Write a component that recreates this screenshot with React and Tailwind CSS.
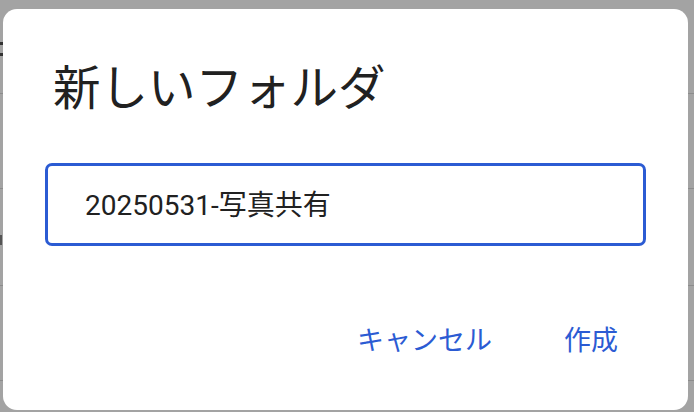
export default function App() {
  return (
    <div className="relative w-[694px] h-[412px] overflow-hidden bg-[#a3a3a3]">
      {/* underlying page content, dimmed behind the scrim */}
      <div className="flex flex-col w-full">
        <div className="h-[94px] border-b border-[#8c8c8c] flex flex-col gap-[8px] pt-[42px]">
          <div className="w-[3px] h-[3px] bg-[#333]" />
          <div className="w-[3px] h-[3px] bg-[#333]" />
        </div>
        <div className="h-[95px] border-b border-[#8c8c8c]" />
        <div className="h-[97px] border-b border-[#8c8c8c] pt-[46px]">
          <div className="w-[2px] h-[10px] bg-[#555]" />
        </div>
        <div className="h-[95px] border-b border-[#8c8c8c]" />
      </div>

      {/* modal dialog */}
      <div
        className="absolute left-[3px] top-[9px] flex flex-col w-[685px] h-[401px] rounded-[14px] bg-white px-[42px]"
        style={{ fontFamily: "'Noto Sans CJK JP', 'Noto Sans', sans-serif" }}
      >
        <h1 className="mt-[47px] pl-[8px] text-[47.5px] leading-[58px] text-[#212121] font-normal">
          新しいフォルダ
        </h1>

        <div className="mt-[49px] flex items-center h-[83px] w-[601px] rounded-[7px] border-[3px] border-[#2b5bd3] pl-[37px] pt-[3px]">
          <span
            className="text-[28px] leading-[34px] text-[#212121]"
            style={{ fontFamily: "Roboto, 'Noto Sans CJK JP', sans-serif" }}
          >
            20250531-写真共有
          </span>
        </div>

        <div className="mt-[77px] flex justify-end items-center gap-[72px] pr-[28px]">
          <span className="text-[27px] leading-[32px] text-[#2b5bd3]">キャンセル</span>
          <span className="text-[27px] leading-[32px] text-[#2b5bd3]">作成</span>
        </div>
      </div>
    </div>
  );
}
